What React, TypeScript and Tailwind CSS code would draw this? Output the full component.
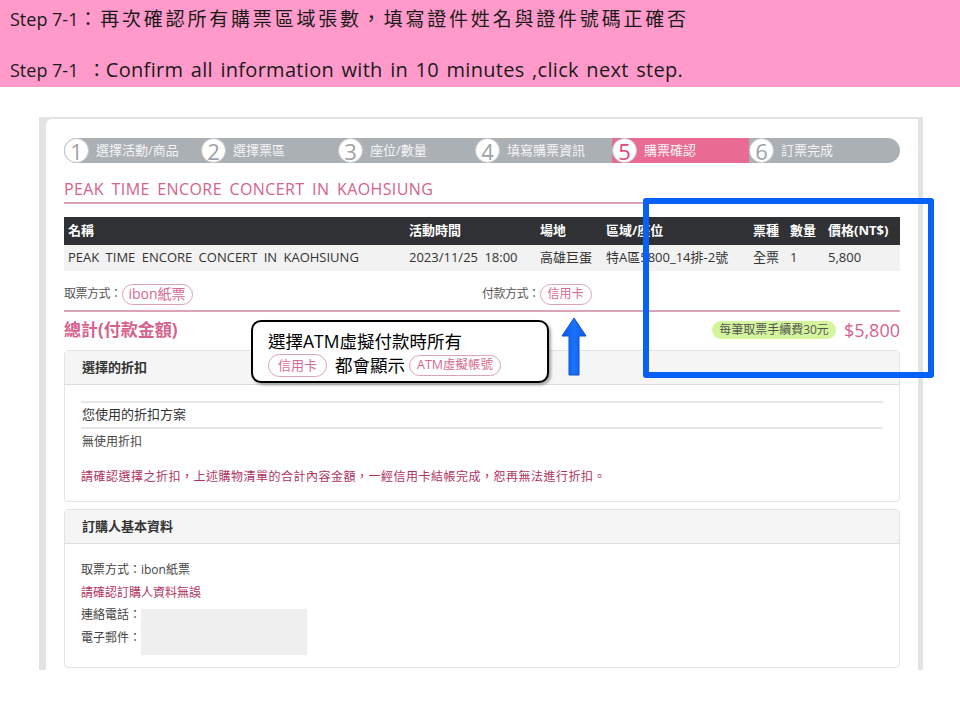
const sans = "font-['Open_Sans','Noto_Sans_CJK_TC',sans-serif]";

const steps = [
  { n: "1", label: "選擇活動/商品" },
  { n: "2", label: "選擇票區" },
  { n: "3", label: "座位/數量" },
  { n: "4", label: "填寫購票資訊" },
  { n: "5", label: "購票確認", active: true },
  { n: "6", label: "訂票完成" },
];

function Pill({ children, className = "" }: { children: React.ReactNode; className?: string }) {
  return (
    <span
      className={`inline-flex items-center rounded-full border border-[#dba3b8] px-[6px] leading-none text-[#d56a90] ${className}`}
    >
      {children}
    </span>
  );
}

function StepBar() {
  return (
    <div className="flex h-[25px] w-[836px] rounded-full bg-[#abb0b5]">
      {steps.map((s) => (
        <div
          key={s.n}
          className={`flex h-[25px] items-center ${s.active ? "w-[137px] bg-[#e96a92]" : "w-[137px]"}`}
        >
          <span
            className={`flex h-[25px] w-[25px] items-center justify-center rounded-full border border-[#c4c8cc] bg-white text-[22px] leading-none ${
              s.active ? "text-[#e0487a]" : "text-[#9da2a7]"
            }`}
          >
            {s.n}
          </span>
          <span className="ml-[7px] text-[13px] text-[#f4f5f6]">{s.label}</span>
        </div>
      ))}
    </div>
  );
}

function OrderTable() {
  const cols = "grid grid-cols-[341px_131px_66px_147px_37px_38px_1fr]";
  const head = ["名稱", "活動時間", "場地", "區域/座位", "票種", "數量", "價格(NT$)"];
  const row = [
    "PEAK TIME ENCORE CONCERT IN KAOHSIUNG",
    "2023/11/25 18:00",
    "高雄巨蛋",
    "特A區5800_14排-2號",
    "全票",
    "1",
    "5,800",
  ];
  return (
    <div className="mt-[13px] text-[13px]">
      <div className={`${cols} h-[28px] items-center bg-[#2f3134] font-bold text-white`}>
        {head.map((h) => (
          <div key={h} className="pl-[4px]">
            {h}
          </div>
        ))}
      </div>
      <div className={`${cols} h-[26px] items-center bg-[#f2f2f2] text-[#333]`}>
        {row.map((c, i) => (
          <div key={i} className="whitespace-nowrap pl-[4px] [word-spacing:3px]">
            {c}
          </div>
        ))}
      </div>
    </div>
  );
}

function Panel({ title, children }: { title: string; children: React.ReactNode }) {
  return (
    <div className="rounded-[4px] border border-[#e3e3e3]">
      <div className="flex h-[34px] items-center border-b border-[#dddddd] bg-[#f5f5f5] pl-[17px] text-[13px] font-bold text-[#333]">
        {title}
      </div>
      {children}
    </div>
  );
}

export default function App() {
  return (
    <div className={`relative h-[720px] w-[960px] overflow-hidden bg-white ${sans}`}>
      <div className="h-[87px] bg-[#ff9acb] pl-[10px] text-[18px] text-[#1a1a1a]">
        <div className="whitespace-nowrap pt-[6px] leading-[26px]">
          Step 7-1<span className="text-[19px] tracking-[2.8px]">：再次確認所有購票區域張數，填寫證件姓名與證件號碼正確否</span>
        </div>
        <div className="mt-[25px] whitespace-pre leading-[26px]">
          {"Step 7-1  ："}
          <span className="text-[20px] tracking-[0.3px] [word-spacing:2px]">Confirm all information with in 10 minutes ,click next step.</span>
        </div>
      </div>

      <div className="ml-[39px] mt-[30px] h-[553px] w-[884px] bg-[#e3e3e3] pl-[7px] pr-[5px] pt-[2px]">
        <div className="h-full rounded-tl-[6px] bg-white px-[18px] pt-[19px]">
          <StepBar />

          <div className="mt-[16px] border-b-2 border-[#dba3b8] pb-[3px] text-[16px] leading-[20px] tracking-[0.4px] text-[#d5628c] [word-spacing:3px]">
            PEAK TIME ENCORE CONCERT IN KAOHSIUNG
          </div>

          <OrderTable />

          <div className="border-b-2 border-[#dba3b8] pb-[6px]">
            <div className="mt-[13px] flex h-[20px] items-center text-[12px] text-[#555]">
              <div className="flex w-[418px] items-center">
                <span className="tracking-[-0.5px]">取票方式：</span>
                <Pill className="h-[21px] text-[14px]">ibon紙票</Pill>
              </div>
              <div className="flex items-center">
                <span className="tracking-[-0.5px]">付款方式：</span>
                <Pill className="h-[21px] px-[7px] text-[12px]">信用卡</Pill>
              </div>
            </div>
          </div>

          <div className="mt-[6px] flex h-[24px] items-center justify-between">
            <span className="text-[17px] font-bold text-[#d5628c]">總計(付款金額)</span>
            <div className="flex items-center">
              <span className="flex h-[18px] items-center rounded-full bg-[#d5f59c] px-[7px] text-[12px] text-[#555]">
                每筆取票手續費30元
              </span>
              <span className="ml-[8px] text-[18px] text-[#d5628c]">$5,800</span>
            </div>
          </div>

          <div className="mt-[8px]">
            <Panel title="選擇的折扣">
              <div className="px-[16px] pb-[14px] pt-[16px] text-[12px] text-[#333]">
                <div className="flex h-[28px] items-center border-y-2 border-[#e6e6e6] pl-[1px] text-[13px]">
                  您使用的折扣方案
                </div>
                <div className="flex h-[26px] items-center pl-[1px] text-[#444]">無使用折扣</div>
                <div className="mt-[12px] leading-[20px] tracking-[0.5px] text-[#b0335f]">
                  請確認選擇之折扣，上述購物清單的合計內容金額，一經信用卡結帳完成，恕再無法進行折扣。
                </div>
              </div>
            </Panel>
          </div>

          <div className="mt-[7px]">
            <Panel title="訂購人基本資料">
              <div className="px-[16px] pb-[12px] pt-[15px] text-[12px] leading-[22.5px] text-[#444]">
                <div>取票方式：ibon紙票</div>
                <div className="text-[#b0335f]">請確認訂購人資料無誤</div>
                <div className="flex">
                  <div>
                    <div>連絡電話：</div>
                    <div>電子郵件：</div>
                  </div>
                  <div className="mt-[5px] h-[46px] w-[166px] bg-[#efefef]" />
                </div>
              </div>
            </Panel>
          </div>
        </div>
      </div>

      {/* annotation callout */}
      <div className="absolute left-[251px] top-[320px] h-[63px] w-[298px] rounded-[10px] border-2 border-black bg-white pl-[15px] pt-[8px] shadow-[2px_2px_3px_rgba(0,0,0,0.35)]">
        <div className="text-[17.5px] leading-[23px] text-black">選擇ATM虛擬付款時所有</div>
        <div className="flex items-center text-[17.5px] leading-[24px] text-black">
          <Pill className="h-[23px] px-[9px] text-[13px]">信用卡</Pill>
          <span className="ml-[8px]">都會顯示</span>
          <Pill className="ml-[4px] h-[21px] px-[7px] text-[12.5px]">ATM虛擬帳號</Pill>
        </div>
      </div>

      <svg className="absolute left-[561px] top-[317px]" width="26" height="60" viewBox="0 0 26 60">
        <defs>
          <linearGradient id="ag" x1="0" y1="0" x2="1" y2="0">
            <stop offset="0" stopColor="#0a5ae8" />
            <stop offset="0.5" stopColor="#1a72ff" />
            <stop offset="1" stopColor="#0a5ae8" />
          </linearGradient>
        </defs>
        <path d="M13 1 L25 19 L18 19 L18 58 L8 58 L8 19 L1 19 Z" fill="url(#ag)" stroke="#0850c8" strokeWidth="1" />
      </svg>

      <div className="absolute left-[643px] top-[198px] h-[180px] w-[291px] rounded-[3px] border-[6px] border-[#0761f7]" />
    </div>
  );
}
